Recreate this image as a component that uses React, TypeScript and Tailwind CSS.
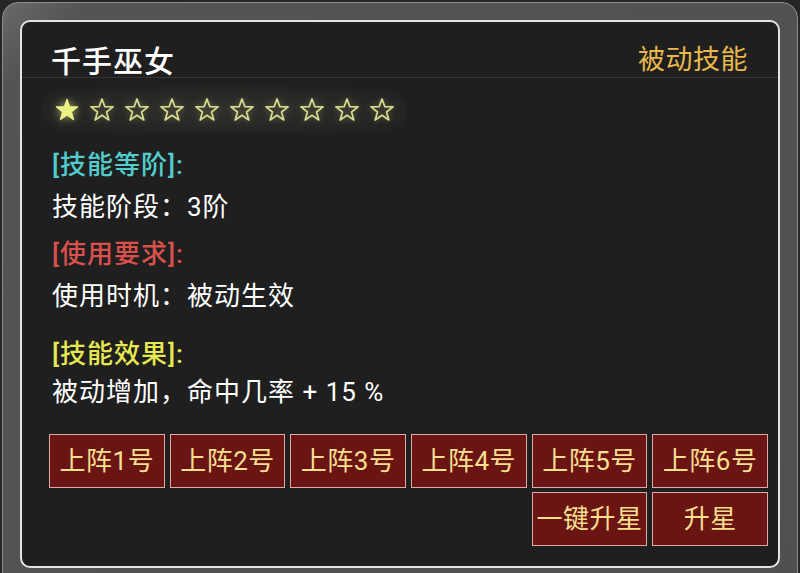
import React from "react";

const FONT = { fontFamily: '"Roboto", "Noto Sans CJK SC", "Noto Sans", sans-serif' };

function Star({ filled }: { filled: boolean }) {
  const d =
    "M12 1.8 L14.6 8.9 L22.2 9.1 L16.2 13.8 L18.3 21.2 L12 16.9 L5.7 21.2 L7.8 13.8 L1.8 9.1 L9.4 8.9 Z";
  return (
    <svg
      width="26"
      height="26"
      viewBox="0 0 24 24"
      className={filled ? "drop-shadow-[0_0_4px_rgba(230,240,120,0.7)]" : "drop-shadow-[0_0_3px_rgba(220,230,140,0.35)]"}
    >
      {filled ? (
        <path d={d} fill="#e9f27e" stroke="#f2f6a0" strokeWidth="0.8" strokeLinejoin="round" />
      ) : (
        <path d={d} fill="none" stroke="#d6da8e" strokeWidth="1.6" strokeLinejoin="round" />
      )}
    </svg>
  );
}

function Btn({ children, className = "" }: { children: React.ReactNode; className?: string }) {
  return (
    <div
      className={
        "h-[54px] flex items-center justify-center bg-[#6a1513] border-[1.5px] border-[#d8aca4] text-[#f7df90] text-[26px] tracking-[0.5px] leading-none " +
        className
      }
    >
      {children}
    </div>
  );
}

export default function App() {
  return (
    <div className="w-[800px] h-[573px] bg-[#262626] pt-[2px] px-[2px] overflow-hidden" style={FONT}>
      <div className="h-[600px] border border-[#8e8e8e] rounded-t-[16px] bg-[linear-gradient(135deg,#6a6a6a_0%,#545454_6%,#505050_100%)] pt-[17px] px-[17px]">
        <div className="h-[548px] rounded-[10px] border-2 border-[#e4e4e4] bg-[#1f1f1f] overflow-hidden">
          {/* header */}
          <div className="pt-[26px] pb-[1px] border-b border-[#363636]">
            <div className="h-[28px] flex items-center justify-between pl-[29px] pr-[30px]">
              <span className="text-[30px] tracking-[1px] font-medium text-white leading-none">千手巫女</span>
              <span className="text-[27px] tracking-[0.5px] text-[#e8b84c] leading-none -mt-[4px]">被动技能</span>
            </div>
          </div>
          {/* stars */}
          <div className="h-[64px] flex items-center pl-[20px]">
            <div className="flex items-center gap-[9px] px-[12px] py-[10px] rounded-[30px] bg-[radial-gradient(ellipse_at_center,rgba(255,255,210,0.07)_0%,rgba(255,255,210,0.03)_60%,transparent_100%)]">
              {Array.from({ length: 10 }).map((_, i) => (
                <Star key={i} filled={i === 0} />
              ))}
            </div>
          </div>
          {/* sections */}
          <div className="pl-[30px] text-[26px] tracking-[1px] leading-[38px] text-white">
            <div className="mt-[4px] text-[#52cccc] font-medium">[技能等阶]:</div>
            <div className="mt-[4px]">技能阶段：3阶</div>
            <div className="mt-[9px] text-[#d9504c] font-medium">[使用要求]:</div>
            <div className="mt-[4px]">使用时机：被动生效</div>
            <div className="mt-[20px] text-[#e6e852] font-medium">[技能效果]:</div>
            <div>被动增加，命中几率 + 15 %</div>
          </div>
          {/* buttons */}
          <div className="pl-[27px] mt-[23px]">
            <div className="grid grid-cols-6 w-[719px] gap-x-[5px] gap-y-[4px]">
              <Btn>上阵1号</Btn>
              <Btn>上阵2号</Btn>
              <Btn>上阵3号</Btn>
              <Btn>上阵4号</Btn>
              <Btn>上阵5号</Btn>
              <Btn>上阵6号</Btn>
              <Btn className="col-start-5">一键升星</Btn>
              <Btn className="col-start-6">升星</Btn>
            </div>
          </div>
        </div>
      </div>
    </div>
  );
}
